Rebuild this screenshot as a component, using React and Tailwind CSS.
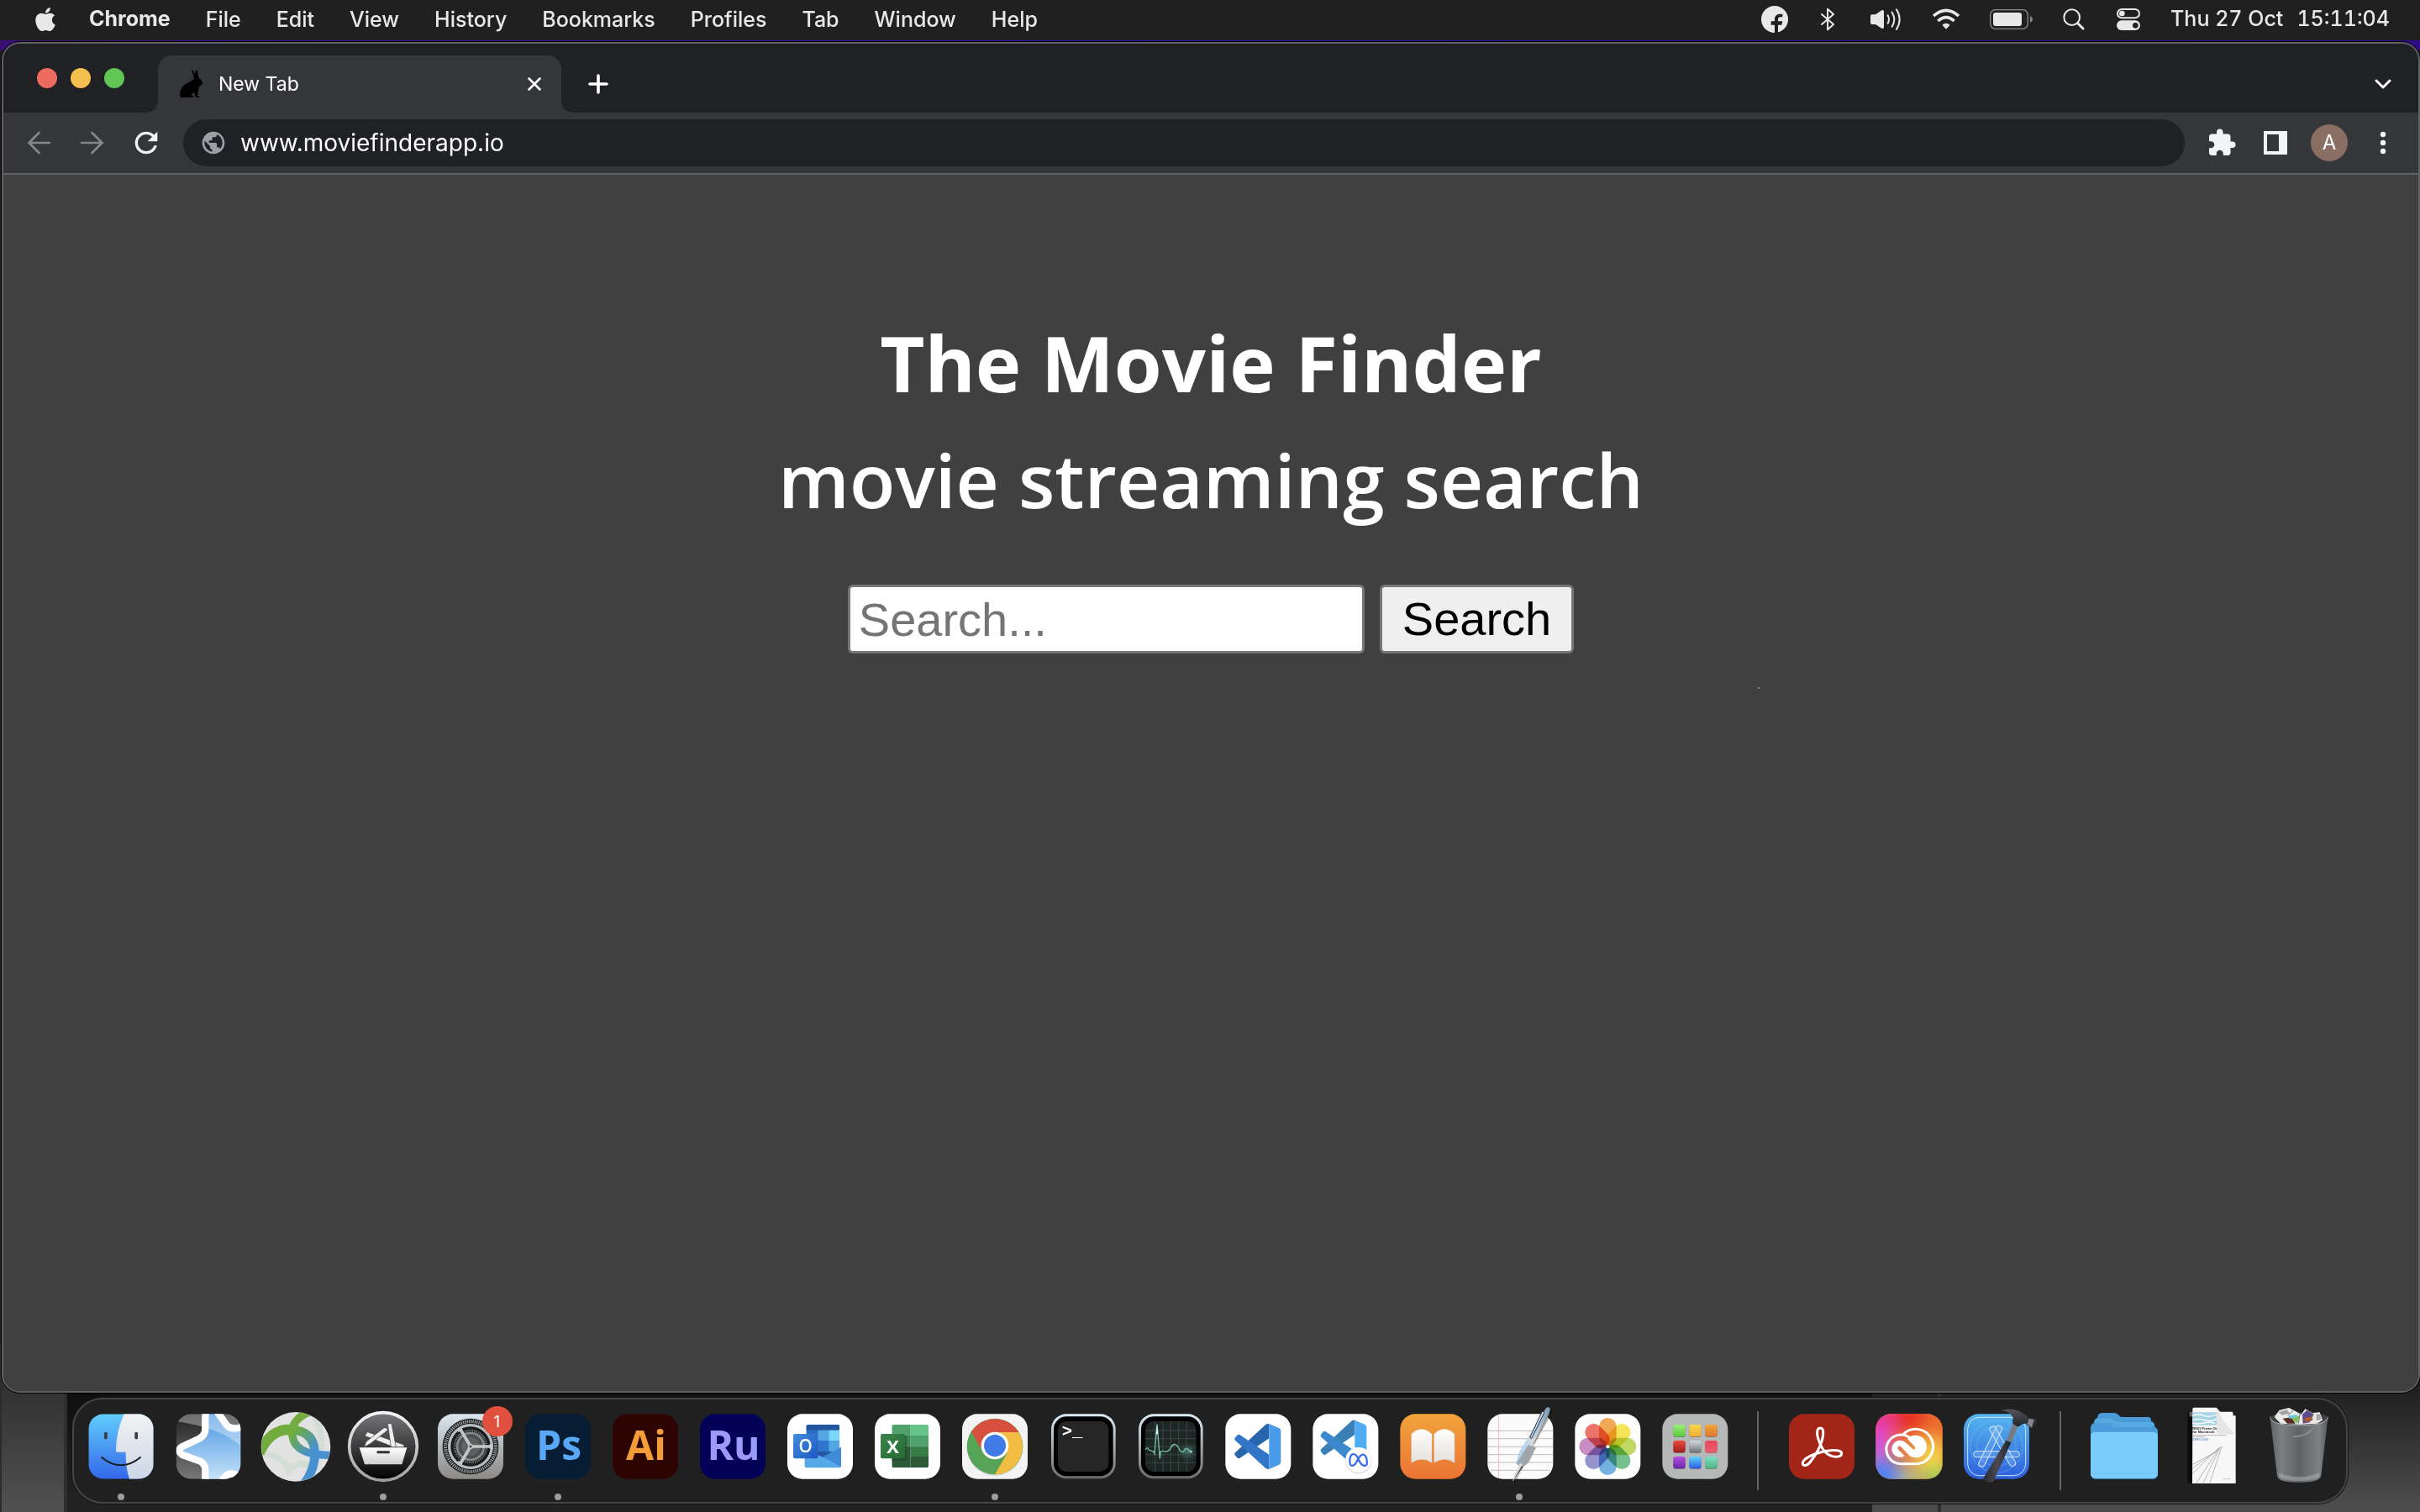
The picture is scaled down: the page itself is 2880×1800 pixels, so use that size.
import React from "react";
import { FaApple } from "react-icons/fa";
import { MdExtension, MdPublic, MdRefresh } from "react-icons/md";

const MENUS = ["File", "Edit", "View", "History", "Bookmarks", "Profiles", "Tab", "Window", "Help"];

function StatusIcons() {
  const fill = "#e8e8e8";
  return (
    <div className="flex items-center">
      <button aria-label="Facebook" className="mr-[39px]">
        <svg className="h-8 w-8" viewBox="48 24 96 96">
          <circle cx="96" cy="72" r="48" fill={fill} />
          <path d="M96 121V92H83V79h13V72c0-12 7-19 18-19h10v11h-8c-5 0-8 3-8 8v7h16l-3 13h-13v29z" fill="#202020" />
        </svg>
      </button>
      <button aria-label="Bluetooth" className="mr-[43px]">
        <svg className="h-7 w-4" viewBox="261 34 48 84" fill="none" stroke={fill} strokeWidth="6" strokeLinejoin="round" strokeLinecap="round">
          <path d="M264 58l42 36-21 19V39l21 19-42 36" />
        </svg>
      </button>
      <button aria-label="Volume" className="mr-[38px]">
        <svg className="h-7 w-9" viewBox="438 30 108 84" fill="none" stroke={fill} strokeWidth="6" strokeLinecap="round">
          <path d="M438 60q0-5 5-5h13l22-15q8-4 8 4v56q0 8-8 4L456 90h-13q-5 0-5-5z" fill={fill} stroke="none" />
          <path d="M500 58q8 14 0 28M515 47q16 25 0 51M531 37q22 35 0 71" />
        </svg>
      </button>
      <button aria-label="Wi-Fi" className="mr-9">
        <svg className="h-7 w-8" viewBox="660 28 96 84" fill="none" stroke={fill} strokeWidth="11">
          <path d="M663 58q45-40 90 0M679 76q29-26 58 0" />
          <path d="M708 105l-14-15q14-12 28 0z" fill={fill} stroke="none" />
        </svg>
      </button>
      <button aria-label="Battery" className="mr-9">
        <svg className="h-6 w-[51px]" viewBox="864 36 153 72">
          <rect x="866" y="38" width="134" height="68" rx="18" fill="none" stroke="#8a8a8a" strokeWidth="4" />
          <rect x="876" y="48" width="102" height="48" rx="9" fill={fill} />
          <path d="M1008 60q9 4 9 12t-9 12z" fill="#8a8a8a" />
        </svg>
      </button>
      <button aria-label="Spotlight" className="mr-[38px]">
        <svg className="h-[26px] w-[26px]" viewBox="1124 34 78 78" fill="none" stroke={fill} strokeLinecap="round">
          <circle cx="1156" cy="66" r="28" strokeWidth="6" />
          <path d="M1178 88l18 18" strokeWidth="9" />
        </svg>
      </button>
      <button aria-label="Control Centre" className="mr-9">
        <svg className="h-[26px] w-7" viewBox="1314 36 84 78">
          <rect x="1317" y="39" width="78" height="31" rx="15.500" fill="none" stroke={fill} strokeWidth="6" />
          <circle cx="1333" cy="54" r="10" fill={fill} />
          <rect x="1314" y="79" width="84" height="35" rx="17.500" fill={fill} />
          <circle cx="1381" cy="97" r="10" fill="#202020" />
        </svg>
      </button>
    </div>
  );
}

function MenuBar() {
  return (
    <header className="relative flex h-12 shrink-0 items-center justify-between bg-[#202020] pr-9 pb-0.5 pl-10 text-[25px] font-medium text-[#e8e8e8]">
      <nav className="flex items-center gap-[42px]">
        <button aria-label="Apple menu" className="-mr-1">
          <FaApple className="h-8 w-7" />
        </button>
        <button className="font-bold">Chrome</button>
        {MENUS.map((m) => (
          <button key={m} className="leading-8">{m}</button>
        ))}
      </nav>
      <div className="flex items-center">
        <StatusIcons />
        <time className="flex gap-4 tabular-nums">
          <span>Thu 27 Oct</span>
          <span>15:11:04</span>
        </time>
      </div>
    </header>
  );
}

function TabStrip() {
  return (
    <div className="flex h-[82px] shrink-0 items-end bg-[#202124] pl-10">
      <div className="mb-[29px] flex gap-4">
        <button aria-label="Close window" className="h-6 w-6 rounded-full bg-[#ed6a5e]" />
        <button aria-label="Minimise window" className="h-6 w-6 rounded-full bg-[#f5bf4f]" />
        <button aria-label="Zoom window" className="h-6 w-6 rounded-full bg-[#62c554]" />
      </div>
      <div className="relative ml-10 flex h-[68px] w-[480px] items-center rounded-t-2xl bg-[#35363a] pr-6 pl-[26px]">
        <svg className="absolute bottom-0 -left-4 h-4 w-4" viewBox="0 0 16 16"><path d="M16 0v16H0Q16 16 16 0z" fill="#35363a" /></svg>
        <svg className="absolute -right-4 bottom-0 h-4 w-4" viewBox="0 0 16 16"><path d="M0 0v16h16Q0 16 0 0z" fill="#35363a" /></svg>
        <svg className="h-8 w-7" viewBox="0 0 28 32">
          <path d="M14 0h2l2 4 1-4h2l1 8 4 4 1 4-4 3-1 5-1 6 3 2h-5l-2-6-4 3 3 1v2H1l-1-3 1-6 4-6 6-3 6-4-1-5z" fill="#000" />
        </svg>
        <span className="ml-[18px] flex-1 text-[23px] leading-8 text-white">New Tab</span>
        <button aria-label="Close tab">
          <svg className="h-4 w-4" viewBox="0 0 16 16" stroke="#fff" strokeWidth="2.600" strokeLinecap="round"><path d="M1.500 1.500l13 13M14.500 1.500l-13 13" /></svg>
        </button>
      </div>
      <button aria-label="New tab" className="mb-[22px] ml-8">
        <svg className="h-6 w-6" viewBox="0 0 24 24" stroke="#fff" strokeWidth="3.600" strokeLinecap="round"><path d="M2 12h20M12 2v20" /></svg>
      </button>
      <button aria-label="Search tabs" className="mr-8 mb-6 ml-auto">
        <svg className="h-5 w-5" viewBox="0 0 20 20" fill="none" stroke="#fff" strokeWidth="3" strokeLinecap="round" strokeLinejoin="round"><path d="M2 6l8 8 8-8" /></svg>
      </button>
    </div>
  );
}

function Toolbar() {
  return (
    <div className="flex h-[74px] shrink-0 items-center border-b-2 border-[#5f6064] bg-[#35363a] pr-[10px] pl-[26px] text-[#f1f3f4]">
      <div className="flex gap-8 text-[#86878a]">
        <button aria-label="Back">
          <svg className="h-8 w-8" viewBox="0 0 32 32" fill="none" stroke="currentColor" strokeWidth="2.700"><path d="M29 16H5M16.500 4L4.500 16l12 12" strokeLinecap="round" /></svg>
        </button>
        <button aria-label="Forward">
          <svg className="h-8 w-8" viewBox="0 0 32 32" fill="none" stroke="currentColor" strokeWidth="2.700"><path d="M3 16h24M15.500 4l12 12-12 12" strokeLinecap="round" /></svg>
        </button>
        <button aria-label="Reload" className="text-[#f1f3f4]">
          <MdRefresh className="-m-1 h-10 w-10" />
        </button>
      </div>
      <label className="ml-7 flex h-14 flex-1 items-center gap-4 rounded-full bg-[#202124] px-5">
        <MdPublic className="h-8 w-8 text-[#9aa0a6]" />
        <input aria-label="Address" defaultValue="www.moviefinderapp.io" className="flex-1 bg-transparent text-[28px] text-white outline-none" />
      </label>
      <div className="ml-3 flex items-center">
        <button aria-label="Extensions" className="flex w-16 justify-center"><MdExtension className="h-9 w-9" /></button>
        <button aria-label="Side panel" className="flex w-16 justify-center">
          <svg className="h-7 w-7" viewBox="0 0 28 28"><path fillRule="evenodd" d="M0 0h28v28H0zM4 4v20h14V4z" fill="currentColor" /></svg>
        </button>
        <button aria-label="Profile" className="flex w-16 justify-center">
          <span className="flex h-11 w-11 items-center justify-center rounded-full bg-[#8a6e64] text-2xl text-white">A</span>
        </button>
        <button aria-label="More" className="flex w-16 justify-center">
          <svg className="h-7 w-7" viewBox="0 0 28 28" fill="currentColor"><circle cx="14" cy="4" r="3.200" /><circle cx="14" cy="14" r="3.200" /><circle cx="14" cy="24" r="3.200" /></svg>
        </button>
      </div>
    </div>
  );
}

function Page() {
  return (
    <main className="flex min-h-0 flex-1 flex-col items-center bg-[#404040] pt-[154px]">
      <h1 className="text-center font-['Open_Sans','Noto_Sans',sans-serif] text-[92px] leading-[139px] font-bold text-white">The Movie Finder</h1>
      <h2 className="text-center font-['Open_Sans','Noto_Sans',sans-serif] text-[89px] leading-[139px] font-semibold text-white">movie streaming search</h2>
      <form className="mt-14 flex gap-[18px] font-['Liberation_Sans',Arial,sans-serif] text-[56px] leading-[76px]" onSubmit={(e) => e.preventDefault()}>
        <input type="text" aria-label="Search movies" placeholder="Search..." className="h-[82px] w-[615px] rounded-md border-[3px] border-[#767676] bg-white px-[10px] text-black outline-none placeholder:text-[#757575]" />
        <button type="submit" className="flex h-[82px] items-center rounded-md border-[3px] border-[#767676] bg-[#efefef] px-6 text-black">Search</button>
      </form>
      <span className="mt-10 ml-[1304px] h-0.5 w-0.5 shrink-0 bg-[#8a8a8a]" />
    </main>
  );
}

const adobe = "'Open Sans','Noto Sans',sans-serif";

function Tile({ cx, fill, r = 54, y = 190, children }) {
  return <rect x={cx - 117} y={y} width="234" height="232" rx={r} fill={fill}>{children}</rect>;
}

function Lin({ id, a, b, mid, x2 = 0, y2 = 1 }) {
  return (
    <linearGradient id={id} x1="0" y1="0" x2={x2} y2={y2}>
      <stop offset="0" stopColor={a} />
      {mid && <stop offset="0.5" stopColor={mid} />}
      <stop offset="1" stopColor={b} />
    </linearGradient>
  );
}

function Finder() {
  return (
    <>
      <defs><Lin id="fi1" a="#62cdfb" b="#3367ea" /><Lin id="fi2" a="#f2f2f3" b="#cdd7e6" /><clipPath id="fic"><rect x="316" y="190" width="232" height="232" rx="54" /></clipPath></defs>
      <g clipPath="url(#fic)">
        <rect x="316" y="190" width="232" height="232" fill="url(#fi1)" />
        <path d="M443 190Q414 255 414 320q0 6 6 6h29q-1 55 13 96h86V190z" fill="url(#fi2)" />
      </g>
      <rect x="372" y="255" width="11" height="25" rx="4" fill="#3a3c40" /><rect x="481" y="255" width="11" height="25" rx="4" fill="#3a3c40" />
      <path d="M363 345q69 56 138 0" fill="none" stroke="#1b1d22" strokeWidth="6" strokeLinecap="round" />
    </>
  );
}

const ANKI_STAR = "M735 170q-2 60-1 76-1 20-22 32l-60 28q-22 14 0 30l62 22q20 10 20 32v50h56q15-45 50-34l40 10V232l-28 8q-30 6-43-12l-42-60z";
function Anki() {
  return (
    <>
      <defs><Lin id="an1" a="#3f8fdd" b="#cfe8fb" /><Lin id="an2" a="#222" b="#777" /><clipPath id="anc"><rect x="630" y="190" width="230" height="232" rx="54" /></clipPath></defs>
      <g clipPath="url(#anc)">
        <rect x="630" y="190" width="230" height="232" fill="url(#an2)" />
        <path d={ANKI_STAR} fill="url(#an1)" />
        <path d="M630 190H860V304Q790 240 630 216z" fill="#fff" opacity=".35" />
        <path d={ANKI_STAR} fill="none" stroke="#fff" strokeWidth="25" strokeLinejoin="round" />
      </g>
    </>
  );
}

function Globe() {
  return (
    <>
      <defs>
        <clipPath id="glc"><circle cx="1055" cy="307" r="123" /></clipPath>
        <linearGradient id="gl1" gradientUnits="userSpaceOnUse" x1="1040" y1="260" x2="1110" y2="330"><stop offset="0" stopColor="#6fae3f" /><stop offset="1" stopColor="#4790d2" /></linearGradient>
      </defs>
      <circle cx="1055" cy="307" r="124" fill="#e2e2e2" />
      <g clipPath="url(#glc)" fill="none">
        <path d="M940 330q70 10 90 60 50-40 80-10M1120 200q40 60 20 130" stroke="#cddbd2" strokeWidth="22" opacity=".7" />
        <path d="M1150 170q-110 20-110 95" stroke="#72ac3f" strokeWidth="28" />
        <path d="M925 330q40-90 115-84" stroke="#72ac3f" strokeWidth="36" />
        <path d="M1040 246q80 6 82 78 5 60-40 120" stroke="url(#gl1)" strokeWidth="32" />
        <path d="M1042 255q0 85 140 82" stroke="url(#gl1)" strokeWidth="28" />
      </g>
    </>
  );
}

function Toolbox() {
  return (
    <>
      <defs><Lin id="tb1" a="#77777b" b="#000" /><Lin id="tb2" a="#f4f4f4" b="#a0a0a0" /><Lin id="tb3" a="#fff" b="#cfcfcf" /></defs>
      <circle cx="1368" cy="306" r="121" fill="url(#tb1)" stroke="url(#tb2)" strokeWidth="11" />
      <g fill="#eee" stroke="#3c3c3f" strokeWidth="2">
        <path d="M1312 254l130 46v8h-36l-104-40z" />
        <path d="M1384 224h14l16 84h-18z" />
        <path d="M1300 308l8-20 62-48q12-4 14 8l-62 48z" />
      </g>
      <path d="M1283 310h170l-18 60H1302z" fill="url(#tb3)" />
      <rect x="1345" y="322" width="47" height="9" rx="4.500" fill="#333" />
    </>
  );
}

function Settings() {
  return (
    <>
      <defs><Lin id="se1" a="#dbe6ee" b="#8b8985" /></defs>
      <Tile cx={180} fill="url(#se1)" />
      <circle cx="180" cy="306" r="100" fill="#1c1e1f" />
      <circle cx="180" cy="306" r="90" fill="none" stroke="#a9adaf" strokeWidth="12" strokeDasharray="3.500 3.570" />
      <circle cx="180" cy="306" r="76" fill="#1a1c1c" stroke="#b9bdbf" strokeWidth="10" />
      <circle cx="180" cy="306" r="57" fill="none" stroke="#6f7475" strokeWidth="8" strokeDasharray="4 3" />
      <circle cx="180" cy="306" r="48" fill="#4c4f4f" stroke="#858a8b" strokeWidth="8" />
      <circle cx="180" cy="306" r="33" fill="#5f605f" />
      <path d="M180 306h74M180 306l-38-64M180 306l-38 64" stroke="#c3c7c9" strokeWidth="11" />
      <path d="M254 298v16M134 250l14-9M134 362l14 9" stroke="#c3c7c9" strokeWidth="12" />
      <circle cx="180" cy="306" r="10" fill="#b9bdbf" /><circle cx="180" cy="306" r="4" fill="#333" />
      <circle cx="276" cy="216" r="54" fill="#e0503f" />
      <text x="274" y="237" textAnchor="middle" fontSize="56" fill="#fff" fontFamily="Inter, sans-serif">1</text>
    </>
  );
}

function Letters({ cx, bg, fg, children }) {
  return (
    <>
      <Tile cx={cx} fill={bg} />
      <text x={cx + 3} y="354" textAnchor="middle" fontSize="144" fontWeight="700" fill={fg} fontFamily={adobe}>{children}</text>
    </>
  );
}

function Outlook() {
  return (
    <>
      <defs><Lin id="ou1" a="#3f8fdc" b="#1f56c2" x2={1} /></defs>
      <Tile cx={168} fill="#fff" />
      <rect x="119" y="228" width="118" height="110" rx="6" fill="#2b6cc4" />
      <path d="M119 248v-14q0-6 6-6h106q6 0 6 6v14z" fill="#2456a0" />
      <rect x="160" y="248" width="39" height="38" fill="#53a5e4" /><rect x="199" y="248" width="38" height="38" fill="#78d7fb" />
      <rect x="160" y="286" width="39" height="38" fill="#2f74cf" /><rect x="199" y="286" width="38" height="38" fill="#53a5e4" />
      <path d="M119 324h118l-59 34z" fill="#2557a5" />
      <path d="M243 308v68q0 6-6 6H119q-6 0-6-6v-60l65 28z" fill="#54a9e6" />
      <path d="M243 308v70L160 334l20 10z" fill="#3f8bd9" />
      <rect x="72" y="261" width="88" height="88" rx="6" fill="url(#ou1)" />
      <text x="116" y="328" textAnchor="middle" fontSize="62" fontWeight="600" fill="#fff" fontFamily={adobe}>O</text>
    </>
  );
}

function Excel() {
  return (
    <>
      <defs><Lin id="ex1" a="#3b8550" b="#256b31" x2={1} /><clipPath id="exc"><rect x="424" y="228" width="131" height="154" rx="7" /></clipPath></defs>
      <Tile cx={480} fill="#fff" />
      <g clipPath="url(#exc)">
        <rect x="424" y="228" width="67" height="39" fill="#4fa26c" /><rect x="491" y="228" width="64" height="39" fill="#66c389" />
        <rect x="424" y="267" width="67" height="38" fill="#3b8551" /><rect x="491" y="267" width="64" height="38" fill="#4fa26c" />
        <rect x="424" y="305" width="67" height="77" fill="#2c5a38" /><rect x="491" y="305" width="64" height="37" fill="#387c48" />
        <rect x="491" y="342" width="64" height="40" fill="#2c5a38" />
      </g>
      <path d="M424 349h47v-82q6 2 6 8v74q0 8-8 8h-45z" fill="#1f3f28" opacity=".5" />
      <rect x="384" y="261" width="87" height="88" rx="6" fill="url(#ex1)" />
      <text x="428" y="329" textAnchor="middle" fontSize="66" fontWeight="700" fill="#fff" fontFamily={adobe}>X</text>
    </>
  );
}

function Chrome() {
  return (
    <>
      <Tile cx={792} fill="#f3f3f3" />
      <circle cx="792" cy="310" r="100" fill="#000" opacity=".12" />
      <circle cx="792" cy="306" r="100" fill="#56a457" />
      <path d="M708 254A100 100 0 0 1 877 255H792L744 316z" fill="#d94f3d" />
      <path d="M877 255A100 100 0 0 1 792 406L836 330 792 255z" fill="#f2bd42" />
      <circle cx="792" cy="303" r="49" fill="#fff" /><circle cx="792" cy="303" r="39" fill="#4079e8" />
    </>
  );
}

function ScreenFrame({ cx, id }) {
  return (
    <>
      <defs><Lin id={id} a="#dcecf4" b="#6f6b6b" /></defs>
      <rect x={cx - 115} y="190" width="230" height="231" rx="54" fill={`url(#${id})`} />
      <rect x={cx - 106} y="199" width="212" height="213" rx="46" fill="#000" />
      <rect x={cx - 91} y="216" width="181" height="180" rx="30" fill="#262626" />
    </>
  );
}

function Terminal() {
  return (
    <>
      <ScreenFrame cx={1110} id="te1" />
      <text x="1033" y="270" fontSize="62" fontWeight="700" fill="#fff" fontFamily="'Liberation Mono', monospace">&gt;_</text>
    </>
  );
}

function Activity() {
  return (
    <>
      <ScreenFrame cx={162} id="ac1" />
      <defs><radialGradient id="ac2"><stop offset="0" stopColor="#4c8f7e" /><stop offset="1" stopColor="#1d2624" stopOpacity="0" /></radialGradient></defs>
      <rect x="71" y="216" width="181" height="180" rx="30" fill="#1d2624" />
      <circle cx="222" cy="325" r="42" fill="url(#ac2)" />
      <path d="M106 217v178M134 216v180M162 216v180M190 216v180M219 217v178M73 249h178M71 278h181M71 306h181M71 335h181M73 364h178" stroke="#3c4744" strokeWidth="3" />
      <path d="M72 318q6-14 12 0 8 4 16 6l4 8 9-105 10 122 3-25q8-4 16 0 12 2 20-14 8-14 16-11 8 2 14 16 6 14 16 10 8-20 18-6 6 6 10 6" fill="none" stroke="#79bfa8" strokeWidth="4" />
      <path d="M109 262l4-35 4 35z" fill="#d6fff3" /><circle cx="235" cy="325" r="3" fill="#fff" />
    </>
  );
}

function VSCode() {
  return (
    <>
      <Tile cx={474} fill="#fff" />
      <path d="M513 225v52L408 348q-5 2-9-2l-8-9q-3-5 1-9L500 229q6-5 13-4z" fill="#2765ad" />
      <path d="M513 387v-52L408 264q-5-2-9 2l-8 9q-3 5 1 9l108 99q6 5 13 4z" fill="#3376c8" />
      <path d="M513 225l36 16q6 3 6 10V361q0 7-6 10l-36 16z" fill="#4a9bea" />
    </>
  );
}

function MetaCode() {
  return (
    <>
      <Tile cx={786} fill="#fff" />
      <path d="M819 212v52L714 335q-5 2-9-2l-7-9q-3-5 1-9L806 216q6-5 13-4z" fill="#3a80b6" />
      <path d="M819 374v-52L714 252q-5-2-9 2l-7 9q-3 5 1 9l108 98q6 5 12 4z" fill="#3c88cf" />
      <path d="M819 212l36 16q6 3 6 10V348q0 7-6 10l-36 16z" fill="#4fabf2" />
      <circle cx="832" cy="356" r="47" fill="#dcdcdc" /><circle cx="832" cy="354" r="45" fill="#fff" />
      <path d="M801 360c0-36 22-32 31-9s18 24 24 24c12 0 7-40-8-40-12 0-18 18-25 30-10 15-22 12-22-5" fill="none" stroke="#3c6ee8" strokeWidth="7" />
    </>
  );
}

function Books() {
  return (
    <>
      <defs><Lin id="bo1" a="#f2a43b" b="#ea7434" /><Lin id="bo2" a="#fff" b="#e4dfda" /></defs>
      <Tile cx={1098} fill="url(#bo1)" />
      <path d="M1020 262q37-38 75 0v104q-36-26-75 0zM1101 262q38-38 75 0v104q-38-26-75 0z" fill="url(#bo2)" stroke="#c56f2b" strokeOpacity=".45" strokeWidth="2" />
    </>
  );
}

function TextEdit() {
  return (
    <>
      <defs><Lin id="tx1" a="#a9cdec" mid="#d0dce6" b="#7397b6" x2={1} y2={0} /></defs>
      <Tile cx={150} fill="#fbfbfb" />
      <path d="M34 250h232M33 278h234M33 307h234M33 335h234M34 363h232M44 391h212" stroke="#bdbdbd" strokeWidth="3" />
      <path d="M73 195v224" stroke="#f6b7b3" strokeWidth="3" />
      <path d="M128 432l28-52 44-90 62-110" stroke="#000" strokeOpacity=".25" strokeWidth="9" fill="none" />
      <path d="M240 172q4-8 10-6 8 2 6 10l-4 14-54 106-18 46-24 36-22-12 14-44 42-70z" fill="url(#tx1)" />
      <path d="M178 300l28 10-26 52-22 20-22-14z" fill="#9fa6ac" />
      <path d="M150 364l12 12-18 30-22 26 8-28z" fill="#d7d9db" /><path d="M156 374l4 4-38 54z" fill="#3c3f42" />
      <path d="M228 180l-44 94 6 4 46-94z" fill="#b9d9f3" stroke="#333" strokeWidth="3" />
      <path d="M252 190l-54 106" stroke="#8d7c5d" strokeWidth="3" />
    </>
  );
}

const PETALS = ["#f09a38", "#f4e03a", "#b5d34a", "#5fb57a", "#5aa3dc", "#8281c4", "#c07ab8", "#ea5a50"];
function Photos() {
  return (
    <>
      <Tile cx={462} fill="#fdfdfd" />
      <g style={{ isolation: "isolate" }}>
        {PETALS.map((c, i) => (
          <rect key={c} x="431" y="204" width="62" height="100" rx="31" fill={c} opacity=".85" style={{ mixBlendMode: "multiply" }} transform={`rotate(${i * 45} 462 306)`} />
        ))}
      </g>
      <circle cx="462" cy="307" r="6" fill="#fff" />
    </>
  );
}

const APPS = [["#9bf07c", "#56c93a"], ["#f8d84e", "#efac35"], ["#f0a63a", "#e0762e"], ["#ea4a3c", "#a01f1b"], ["#d5dadf", "#6e7276"], ["#ea465a", "#ee5f70"], ["#b34fe0", "#6a2aa8"], ["#5fd4fb", "#2f5be4"], ["#7fe0c8", "#4fb57e"]];
function Launchpad() {
  return (
    <>
      <Tile cx={774} fill="#b6b7b7" />
      {APPS.map(([a, b], i) => (
        <g key={a}>
          <defs><Lin id={`la${i}`} a={a} b={b} /></defs>
          <rect x={696 + (i % 3) * 57} y={230 + Math.floor(i / 3) * 57} width="43" height="43" rx="9" fill="#777" />
          <rect x={696 + (i % 3) * 57} y={228 + Math.floor(i / 3) * 57} width="43" height="43" rx="9" fill={`url(#la${i})`} />
        </g>
      ))}
    </>
  );
}

function Acrobat() {
  return (
    <>
      <Tile cx={234} fill="#a32517" />
      <path d="M229 240c-16 0-14 28 0 58 6 14 20 36 40 42 22 6 36 2 36-10 0-16-54-12-86 0-30 10-52 22-53 36 0 12 16 10 28-6 14-18 32-46 40-72 8-26 8-48-5-48z" fill="none" stroke="#fff" strokeWidth="9" />
    </>
  );
}

function CreativeCloud() {
  return (
    <>
      <defs>
        <clipPath id="ccc"><rect x="427" y="190" width="238" height="232" rx="54" /></clipPath>
        <filter id="ccb" x="-50%" y="-50%" width="200%" height="200%"><feGaussianBlur stdDeviation="30" /></filter>
      </defs>
      <g clipPath="url(#ccc)">
        <rect x="420" y="180" width="250" height="250" fill="#e8793a" />
        <g filter="url(#ccb)">
          <circle cx="440" cy="210" r="70" fill="#e93a9d" /><circle cx="545" cy="195" r="65" fill="#e72f24" /><circle cx="655" cy="225" r="50" fill="#ee6a2c" />
          <circle cx="430" cy="300" r="50" fill="#d24df0" /><circle cx="450" cy="410" r="70" fill="#4b80f8" /><circle cx="625" cy="340" r="60" fill="#f6d548" />
          <circle cx="550" cy="420" r="45" fill="#a8c088" /><circle cx="650" cy="420" r="40" fill="#5fe05a" />
        </g>
      </g>
      <path d="M524 264A62 62 0 1 1 570 368H516A52 52 0 1 1 550 276L590 314" fill="none" stroke="#fff" strokeWidth="9" strokeLinecap="round" />
      <path d="M568 266a40 40 0 1 1-20 74L516 306q-6-4-10 2-2 6 2 10l22 22a30 30 0 1 1 6-46l24 22q6 2 8-4 0-4-4-8l-24-24q10-14 28-14z" fill="#fff" />
    </>
  );
}

function Xcode() {
  return (
    <>
      <defs><Lin id="xc1" a="#55b7ee" b="#2d5fdc" /><Lin id="xc2" a="#55565c" b="#1d1e22" /><linearGradient id="xc3"><stop offset="0" stopColor="#2a2b30" /><stop offset=".5" stopColor="#4a4b52" /><stop offset="1" stopColor="#202126" /></linearGradient></defs>
      <Tile cx={858} fill="url(#xc1)" />
      <rect x="755" y="202" width="207" height="208" rx="42" fill="none" stroke="#cfe6fa" strokeWidth="3" />
      <circle cx="858" cy="306" r="94" fill="none" stroke="#8cc3f1" strokeWidth="2" opacity=".6" /><circle cx="858" cy="306" r="70" fill="none" stroke="#8cc3f1" strokeWidth="2" opacity=".6" />
      <g fill="#8fc0f4" fillOpacity=".3" stroke="#d6e9fb" strokeWidth="3">
        <rect x="776" y="323" width="164" height="21" rx="10" />
        <rect x="825" y="225" width="22" height="160" rx="10" transform="rotate(26 836 305)" />
        <rect x="869" y="225" width="22" height="160" rx="10" transform="rotate(-30 880 305)" />
      </g>
      <path d="M918 218l20 10-30 68-16-6z" fill="#777a80" />
      <path d="M892 284l18 8-62 138q-8 8-24 2-14-6-11-16z" fill="url(#xc3)" />
      <path d="M872 178q50-16 90 16 8 8 12 12l16 0 12 6-4 26-12 4-16-12-8-6q-12 0-18 6-8 8-16 2l-12-8q-2-12 2-20-14-26-44-26z" fill="url(#xc2)" />
      <path d="M974 206l-6 20 16 14 8-30z" fill="#85878f" />
    </>
  );
}

function Folder() {
  return (
    <>
      <path d="M168 204q2-18 16-18h44q8 0 14 6l10 9h98q8 0 10 10v30H168z" fill="#4a9bd8" />
      <path d="M156 222q2-18 16-18h44q8 0 14 6l10 7h120q10 2 12 12v30H156z" fill="#57a9e2" stroke="#3f8fd0" strokeWidth="2" />
      <path d="M144 240q2-18 16-18h44q8 0 14 6l10 8h140q14 0 16 14v30H144z" fill="#4b9cdb" />
      <rect x="144" y="254" width="240" height="168" rx="16" fill="#4f9fd0" />
      <rect x="144" y="254" width="240" height="165" rx="16" fill="#7accfa" />
      <path d="M146 402h236" stroke="#6bbcec" strokeWidth="3" />
    </>
  );
}

function Documents() {
  return (
    <>
      <rect x="490" y="183" width="20" height="254" rx="4" fill="#0c0c0c" /><rect x="497" y="183" width="16" height="16" fill="#666" />
      <path d="M508 172q0-5 5-5h80l14 15h42q4 0 4 14h9v242H507z" fill="#f7f7f7" />
      <path d="M508 184h86v46h-87z" fill="#a9d3e6" /><path d="M508 196q20-8 40 0t46-4M508 212q24-8 44 0t42-4M508 222q20 6 40 0t40 2" stroke="#fff" strokeWidth="4" fill="none" />
      <text x="508" y="245" fontSize="12" fontWeight="700" fill="#222" fontFamily="'Liberation Sans', sans-serif">RISO Printer Driver</text>
      <text x="508" y="257" fontSize="12" fontWeight="700" fill="#222" fontFamily="'Liberation Sans', sans-serif">for Macintosh</text>
      <text x="508" y="284" fontSize="8" fill="#3a78b8" fontFamily="'Liberation Sans', sans-serif">USER&apos;S GUIDE</text>
      <path d="M508 266h120M508 272h44" stroke="#999" strokeWidth="2" />
      <path d="M508 370l90-48M508 384l92-68M508 403l94-92M522 436l82-126M546 436l62-130M570 436l42-130" stroke="#999" strokeWidth="2" />
      <path d="M597 176q0 50-2 84 30-2 62 2-40-40-60-86z" fill="#e6e6e6" stroke="#ccc" strokeWidth="1" />
      <path d="M615 422h30" stroke="#bbb" strokeWidth="2" />
    </>
  );
}

function Trash() {
  return (
    <>
      <defs><linearGradient id="tr1"><stop offset="0" stopColor="#5f6264" /><stop offset=".2" stopColor="#7c8082" /><stop offset=".5" stopColor="#606365" /><stop offset=".85" stopColor="#7f8284" /><stop offset="1" stopColor="#55585a" /></linearGradient></defs>
      <ellipse cx="888" cy="204" rx="103" ry="20" fill="#3f4244" />
      <path d="M785 204q20 26 103 26t103-26l-24 206q-4 24-79 24t-78-24z" fill="url(#tr1)" />
      <path d="M785 200q-2 30 103 31 105-1 103-31" fill="none" stroke="#a9acae" strokeWidth="3" />
      <path d="M800 200l18-24 34-8 20 10 24 14 14-20 26 14 26-2 10 28-20 12-60 4-70-4z" fill="#e9e9e9" />
      <path d="M830 206l30-4 16 22-30 0z" fill="#5a2f26" /><path d="M848 196l36-4-6 12-22 2z" fill="#6fc7e0" /><path d="M862 206l28-10-8 28z" fill="#7cc25a" />
      <path d="M900 192l16-16 24 14-14 30-24 4z" fill="#5d4b8e" /><path d="M908 204l26-4 4 12-30 8z" fill="#b05a2c" /><path d="M815 184l30-10 10 14-28 6zM950 190l14 2 2 18-16 4z" fill="#a5a5a5" />
      <path d="M892 186l-6 38M868 178l-20 16M940 188l-10 28" stroke="#777" strokeWidth="3" />
      <path d="M866 268q50 0 74-32-10 34-74 38zM815 400q70 30 148 0l-4 16q-70 26-140 0z" fill="#a7aaac" opacity=".6" />
    </>
  );
}

const DOCK = [
  ["Finder", 276, <Finder />, true],
  ["Anki", 589, <Anki />],
  ["AnyConnect", 899, <Globe />],
  ["Toolbox", 1212, <Toolbox />, true],
  ["System Preferences", 24, <Settings />],
  ["Photoshop", 336, <Letters cx={492} bg="#071d33" fg="#59a8f8">Ps</Letters>, true],
  ["Illustrator", 648, <Letters cx={804} bg="#2d0401" fg="#f29d38">Ai</Letters>],
  ["Rush", 960, <Letters cx={1116} bg="#020057" fg="#9b9af8">Ru</Letters>],
  ["Outlook", 12, <Outlook />],
  ["Excel", 324, <Excel />],
  ["Chrome", 636, <Chrome />, true],
  ["Terminal", 950, <Terminal />],
  ["Activity Monitor", 2, <Activity />],
  ["Visual Studio Code", 314, <VSCode />],
  ["VS Code at Meta", 626, <MetaCode />],
  ["Books", 938, <Books />],
  ["TextEdit", -10, <TextEdit />, true],
  ["Photos", 302, <Photos />],
  ["Launchpad", 614, <Launchpad />],
  null,
  ["Acrobat", 78, <Acrobat />],
  ["Creative Cloud", 390, <CreativeCloud />],
  ["Xcode", 702, <Xcode />],
  null,
  ["Folder", 108, <Folder />],
  ["Documents", 420, <Documents />],
  ["Trash", 732, <Trash />],
];

function Dock() {
  return (
    <nav aria-label="Dock" className="relative mx-auto mt-1.5 mb-2.5 flex h-[126px] shrink-0 rounded-[36px] border-2 border-[#454545] bg-[#202020] px-1 shadow-[0_0_0_1px_#151515]">
      {DOCK.map((item, i) =>
        item ? (
          <button key={item[0]} aria-label={item[0]} className="flex w-26 flex-col items-center">
            <svg className="h-26 w-26 overflow-visible" viewBox={`${item[1]} 138 312 312`}>{item[2]}</svg>
            {item[3] && <span className="mt-2 h-2 w-2 rounded-full bg-[#9e9e9e]" />}
          </button>
        ) : (
          <span key={i} className="flex w-12 justify-center pt-3.5">
            <span className="h-[94px] w-0.5 bg-[#646464]" />
          </span>
        )
      )}
    </nav>
  );
}

function Desktop() {
  return (
    <div className="absolute inset-0 flex flex-col justify-between bg-[#1c1c1c]">
      <div className="h-[60px] bg-gradient-to-r from-[#3a0f78] via-[#2a10a8] to-[#2c0c80]" />
      <div className="flex h-[200px]">
        <div className="w-0.5 bg-[#2c2c2c]" />
        <div className="w-[74px] bg-gradient-to-b from-[#333] from-30% to-[#515151]" />
        <div className="w-1 bg-[#2e2e2e]" />
        <div className="flex-1 bg-gradient-to-b from-[#0c0c0c] from-20% to-[#222] to-90%" />
        <div className="w-[652px] bg-gradient-to-b from-[#1c1c1c] from-20% to-[#4c4c4c] to-95%">
          <div className="ml-[78px] h-full w-1 bg-[#2e2e2e]" />
        </div>
      </div>
    </div>
  );
}

export default function App() {
  return (
    <div className="relative flex h-screen flex-col overflow-hidden font-['Inter','Roboto',sans-serif]">
      <Desktop />
      <MenuBar />
      <section className="relative mt-0.5 ml-0.5 flex min-h-0 flex-1 flex-col overflow-hidden rounded-[22px] border-2 border-[#616164] shadow-[0_0_0_1px_#000]">
        <TabStrip />
        <Toolbar />
        <Page />
      </section>
      <Dock />
    </div>
  );
}
